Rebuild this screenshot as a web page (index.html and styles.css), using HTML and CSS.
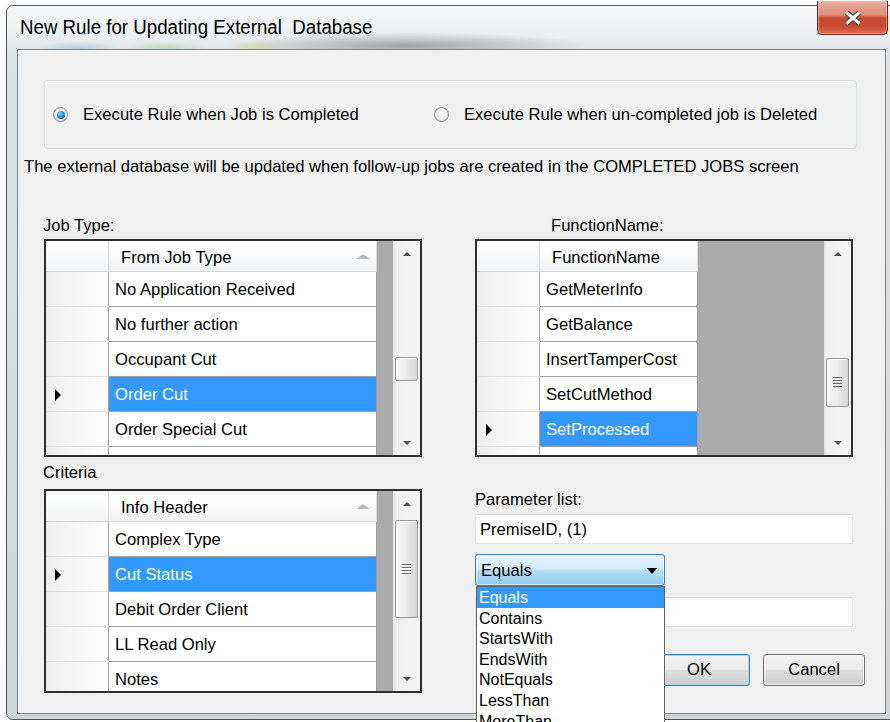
FILE: index.html
```html
<!DOCTYPE html>
<html lang="en">
<head>
<meta charset="utf-8">
<title>New Rule for Updating External Database</title>
<link rel="stylesheet" href="styles.css">
</head>
<body>
<div class="window">
  <div class="titlebar">
    <span class="title">New Rule for Updating External  Database</span>
    <div class="close" role="button" aria-label="Close">
      <svg width="18" height="14" viewBox="0 0 18 14">
        <path d="M2.5 1.5 L15.5 12.5 M15.5 1.5 L2.5 12.5" stroke="#3a3f44" stroke-width="5.5" fill="none"/>
        <path d="M2.5 1.5 L15.5 12.5 M15.5 1.5 L2.5 12.5" stroke="#ffffff" stroke-width="3" fill="none"/>
      </svg>
    </div>
  </div>

  <div class="client">
    <div class="run-when">
      <label class="radio radio-first"><span class="radio-mark"><span class="radio-dot"></span></span>Execute Rule when Job is Completed</label>
      <label class="radio"><span class="radio-mark"></span>Execute Rule when un-completed job is Deleted</label>
    </div>

    <p class="note">The external database will be updated when follow-up jobs are created in the COMPLETED JOBS screen</p>

    <div class="panes">
      <div class="pane">
        <div class="caption caption-job">Job Type:</div>
        <div class="dgv dgv-tall">
          <div class="dgv-body">
            <div class="dgv-head">
              <div class="rh"></div>
              <div class="ch w-job">From Job Type<span class="sort-glyph"></span></div>
            </div>
            <div class="dgv-row"><div class="rh"></div><div class="cell w-job">No Application Received</div></div>
            <div class="dgv-row"><div class="rh"></div><div class="cell w-job">No further action</div></div>
            <div class="dgv-row"><div class="rh"></div><div class="cell w-job">Occupant Cut</div></div>
            <div class="dgv-row current"><div class="rh"><span class="row-pointer"></span></div><div class="cell w-job">Order Cut</div></div>
            <div class="dgv-row"><div class="rh"></div><div class="cell w-job">Order Special Cut</div></div>
            <div class="dgv-row"><div class="rh"></div><div class="cell w-job"></div></div>
          </div>
          <div class="vscroll">
            <div class="sb-btn"><span class="arrow-up"></span></div>
            <div class="sb-track"><div class="sb-thumb" style="margin-top:91px;height:24px"></div></div>
            <div class="sb-btn"><span class="arrow-down"></span></div>
          </div>
        </div>

        <div class="caption caption-criteria">Criteria</div>
        <div class="dgv dgv-short">
          <div class="dgv-body">
            <div class="dgv-head">
              <div class="rh"></div>
              <div class="ch w-job">Info Header<span class="sort-glyph"></span></div>
            </div>
            <div class="dgv-row"><div class="rh"></div><div class="cell w-job">Complex Type</div></div>
            <div class="dgv-row current"><div class="rh"><span class="row-pointer"></span></div><div class="cell w-job">Cut Status</div></div>
            <div class="dgv-row"><div class="rh"></div><div class="cell w-job">Debit Order Client</div></div>
            <div class="dgv-row"><div class="rh"></div><div class="cell w-job">LL Read Only</div></div>
            <div class="dgv-row"><div class="rh"></div><div class="cell w-job">Notes</div></div>
          </div>
          <div class="vscroll">
            <div class="sb-btn"><span class="arrow-up"></span></div>
            <div class="sb-track"><div class="sb-thumb" style="margin-top:4px;height:98px"><span class="grip"></span></div></div>
            <div class="sb-btn"><span class="arrow-down"></span></div>
          </div>
        </div>
      </div>

      <div class="pane">
        <div class="caption caption-fn">FunctionName:</div>
        <div class="dgv dgv-tall">
          <div class="dgv-body">
            <div class="dgv-head">
              <div class="rh"></div>
              <div class="ch w-fn">FunctionName</div>
            </div>
            <div class="dgv-row"><div class="rh"></div><div class="cell w-fn">GetMeterInfo</div></div>
            <div class="dgv-row"><div class="rh"></div><div class="cell w-fn">GetBalance</div></div>
            <div class="dgv-row"><div class="rh"></div><div class="cell w-fn">InsertTamperCost</div></div>
            <div class="dgv-row"><div class="rh"></div><div class="cell w-fn">SetCutMethod</div></div>
            <div class="dgv-row current"><div class="rh"><span class="row-pointer"></span></div><div class="cell w-fn">SetProcessed</div></div>
            <div class="dgv-row"><div class="rh"></div><div class="cell w-fn"></div></div>
          </div>
          <div class="vscroll">
            <div class="sb-btn"><span class="arrow-up"></span></div>
            <div class="sb-track"><div class="sb-thumb" style="margin-top:92px;height:49px"><span class="grip"></span></div></div>
            <div class="sb-btn"><span class="arrow-down"></span></div>
          </div>
        </div>

        <div class="caption caption-params">Parameter list:</div>
        <div class="textbox">PremiseID, (1)</div>

        <div class="combo-wrap">
          <div class="combo"><span>Equals</span><span class="combo-arrow"></span></div>
          <ul class="combo-list">
            <li class="picked">Equals</li>
            <li>Contains</li>
            <li>StartsWith</li>
            <li>EndsWith</li>
            <li>NotEquals</li>
            <li>LessThan</li>
            <li>MoreThan</li>
          </ul>
        </div>

        <div class="textbox textbox-value"></div>

        <div class="actions">
          <button class="btn btn-default" type="button">OK</button>
          <button class="btn" type="button">Cancel</button>
        </div>
      </div>
    </div>
  </div>
</div>
</body>
</html>
```

FILE: styles.css
```css
* { box-sizing: border-box; }

html, body { margin: 0; padding: 0; }

body {
  width: 890px;
  height: 722px;
  overflow: hidden;
  background: #ffffff;
  font-family: "Liberation Sans", Arial, sans-serif;
  font-size: 16.6px;
  color: #000;
}

/* ---------- window frame ---------- */
.window {
  position: relative;
  width: 900px;
  height: 715px;
  margin: 5px 0 0 6px;
  border: 1px solid #4f5457;
  border-radius: 7px 0 0 7px;
  background:
    radial-gradient(180px 14px at 400px 40px, rgba(95, 100, 106, .5), rgba(95, 100, 106, 0)),
    radial-gradient(40px 7px at 70px 42px, rgba(110, 160, 205, .35), rgba(110, 160, 205, 0)),
    radial-gradient(40px 7px at 160px 42px, rgba(140, 190, 120, .35), rgba(140, 190, 120, 0)),
    radial-gradient(30px 7px at 250px 42px, rgba(215, 200, 110, .35), rgba(215, 200, 110, 0)),
    linear-gradient(180deg, #f6f7f8 0, #eceff1 30px, #dde2e4 48px, #cfd5d7 100%);
}

.titlebar {
  height: 43px;
  padding: 10px 0 0 13px;
}

.title {
  display: inline-block;
  font-size: 20px;
  line-height: 23px;
  white-space: pre;
  transform: scaleX(.935);
  transform-origin: 0 50%;
}

.close {
  position: absolute;
  top: -5px;
  left: 810px;
  width: 71px;
  height: 34px;
  border: 1px solid #6b2a1e;
  border-top: none;
  border-radius: 0 0 5px 5px;
  background: linear-gradient(180deg, #eab0a2 0%, #df8c77 42%, #c9472c 52%, #c54a2f 75%, #dc6f52 100%);
  box-shadow: inset 0 0 0 1px rgba(255, 210, 190, .45);
  display: flex;
  align-items: center;
  justify-content: center;
}

/* ---------- client area ---------- */
.client {
  margin-left: 10px;
  width: 869px;
  height: 665px;
  border: 1px solid #7d8489;
  background: #f0f0f0;
  padding-top: 30px;
}

.run-when {
  margin-left: 26px;
  width: 813px;
  height: 69px;
  border: 1px solid #d5dfe5;
  border-radius: 4px;
  box-shadow: inset 1px 1px 0 #ffffff;
  display: flex;
  align-items: center;
  padding: 0 0 0 8px;
}

.radio {
  display: flex;
  align-items: center;
  gap: 15px;
  line-height: 19px;
}

.radio-first { width: 381px; }

.radio-mark {
  width: 15px;
  height: 15px;
  border-radius: 50%;
  border: 1px solid #8e8f8f;
  background: radial-gradient(circle at 50% 40%, #ffffff 0, #ececec 55%, #cbcbcb 100%);
  display: flex;
  align-items: center;
  justify-content: center;
}

.radio-dot {
  width: 8px;
  height: 8px;
  border-radius: 50%;
  background: radial-gradient(circle at 40% 35%, #9bdcff 0, #2c8fd8 45%, #0d3f78 100%);
}

.note {
  margin: 8px 0 0 6px;
  line-height: 19px;
}

/* ---------- two panes ---------- */
.panes {
  display: grid;
  grid-template-columns: 378px 378px;
  column-gap: 53px;
  margin: 40px 0 0 26px;
}

.caption {
  line-height: 19px;
  height: 19px;
  margin-bottom: 4px;
}

.caption-job { margin-left: -1px; }
.caption-fn { margin-left: 76px; }
.caption-criteria { margin-top: 6px; margin-bottom: 7px; margin-left: -1px; }
.caption-params { margin-top: 33px; margin-bottom: 5px; }

/* ---------- data grid ---------- */
.dgv {
  display: flex;
  width: 378px;
  border: 2px solid #2f2f2f;
  background: #ababab;
  overflow: hidden;
}

.dgv-tall { height: 218px; }
.dgv-short { height: 204px; }

.dgv-body {
  flex: 1;
  min-width: 0;
  overflow: hidden;
}

.dgv-head,
.dgv-row { display: flex; }

.dgv-head { height: 31px; }
.dgv-row { height: 35px; }

.rh {
  width: 63px;
  flex: none;
  border-right: 1px solid #a0a0a0;
  border-bottom: 1px solid #e2e2e2;
  background: linear-gradient(to right, #ededed, #f8f8f8 55%, #fdfdfd);
  display: flex;
  align-items: center;
  padding-left: 9px;
}

.dgv-head .rh {
  border-right-color: #dadada;
  border-bottom-color: #d5d5d5;
  background: linear-gradient(#ffffff, #f2f3f5);
}

.ch {
  flex: none;
  display: flex;
  align-items: center;
  padding: 3px 5px 0 12px;
  border-right: 1px solid #dadada;
  border-bottom: 1px solid #d5d5d5;
  background: linear-gradient(#ffffff 0%, #fbfbfc 50%, #eff1f3 100%);
  white-space: nowrap;
}

.ch .sort-glyph { margin-top: -3px; }

.cell {
  flex: none;
  display: flex;
  align-items: center;
  padding: 2px 0 0 6px;
  background: #ffffff;
  border-right: 1px solid #a0a0a0;
  border-bottom: 1px solid #a0a0a0;
  white-space: nowrap;
  overflow: hidden;
}

.w-job { width: 268px; }
.w-fn { width: 158px; }

.dgv-row.current .cell {
  background: #3399ff;
  color: #ffffff;
}

.row-pointer {
  width: 0;
  height: 0;
  margin-top: 2px;
  border-left: 6px solid #000;
  border-top: 6px solid transparent;
  border-bottom: 6px solid transparent;
}

.sort-glyph {
  margin-left: auto;
  margin-right: 1px;
  width: 0;
  height: 0;
  border-left: 7px solid transparent;
  border-right: 7px solid transparent;
  border-bottom: 5px solid #b3bac2;
}

/* ---------- vertical scrollbar ---------- */
.vscroll {
  width: 27px;
  flex: none;
  display: flex;
  flex-direction: column;
  background: linear-gradient(to right, #e4e4e4 0, #f1f1f1 3px, #f4f4f4 100%);
}

.sb-btn {
  height: 25px;
  flex: none;
  display: flex;
  align-items: center;
  justify-content: center;
}

.sb-track {
  flex: 1;
  padding: 0 2px;
}

.sb-thumb {
  border: 1px solid #979797;
  border-radius: 2px;
  background: linear-gradient(to right, #f7f7f7, #ececec 45%, #d7d7d7);
  box-shadow: inset 1px 1px 0 #ffffff;
  display: flex;
  align-items: center;
  justify-content: center;
}

.grip {
  width: 9px;
  height: 11px;
  background: repeating-linear-gradient(to bottom, #666666 0 1px, #f2f2f2 1px 3px);
}

.arrow-up {
  width: 0;
  height: 0;
  border-left: 4.5px solid transparent;
  border-right: 4.5px solid transparent;
  border-bottom: 4px solid #505050;
}

.arrow-down {
  width: 0;
  height: 0;
  border-left: 4.5px solid transparent;
  border-right: 4.5px solid transparent;
  border-top: 4px solid #505050;
}

/* ---------- inputs ---------- */
.textbox {
  height: 30px;
  border: 1px solid #dfe2e6;
  border-top-color: #cdd1d6;
  border-radius: 2px;
  background: #ffffff;
  padding: 2px 0 0 4px;
  display: flex;
  align-items: center;
  white-space: nowrap;
}

.textbox-value { margin-top: 11px; }

.combo-wrap {
  position: relative;
  width: 190px;
  margin-top: 10px;
}

.combo {
  height: 32px;
  border: 1px solid #3c7fb1;
  border-radius: 3px;
  background: linear-gradient(180deg, #e6f4fc 0%, #d6eefb 46%, #b4ddf4 52%, #93cbec 100%);
  box-shadow: inset 0 0 0 1px rgba(255, 255, 255, .55);
  display: flex;
  align-items: center;
  padding: 1px 7px 0 5px;
}

.combo-arrow {
  margin-left: auto;
  width: 0;
  height: 0;
  border-left: 5px solid transparent;
  border-right: 5px solid transparent;
  border-top: 6px solid #000;
}

.combo-list {
  position: absolute;
  z-index: 2;
  top: 100%;
  left: 1px;
  width: 189px;
  margin: 0;
  padding: 0;
  list-style: none;
  border: 1px solid #646464;
  background: #ffffff;
  font-size: 16px;
}

.combo-list li {
  height: 20.6px;
  line-height: 18px;
  padding: 2px 0 0 2px;
  white-space: nowrap;
}

.combo-list li.picked {
  background: #3399ff;
  color: #ffffff;
}

/* ---------- buttons ---------- */
.actions {
  display: flex;
  justify-content: flex-end;
  gap: 13px;
  margin: 27px -12px 0 0;
}

.btn {
  width: 102px;
  height: 32px;
  padding: 0;
  border: 1px solid #707070;
  border-radius: 3px;
  background: linear-gradient(180deg, #f2f2f2 0%, #ebebeb 48%, #dddddd 52%, #cfcfcf 100%);
  box-shadow: inset 0 0 0 1px rgba(255, 255, 255, .7);
  font-family: inherit;
  font-size: 16.6px;
  color: #000;
}

.btn-default {
  border-color: #3c7fb1;
  box-shadow: inset 0 0 0 1px #9fd7f5;
}
```
